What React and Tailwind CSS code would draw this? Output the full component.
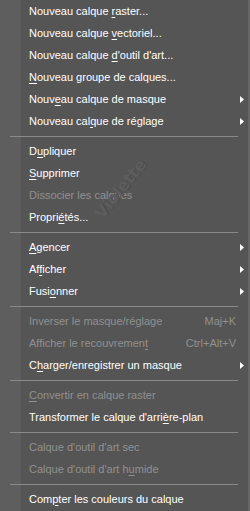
import React from 'react';

const groups = [
  [
    { pre: 'Nouveau calque ', u: 'r', post: 'aster...' },
    { pre: 'Nouveau calque ', u: 'v', post: 'ectoriel...' },
    { pre: 'Nouveau calque ', u: 'd', post: "'outil d'art..." },
    { pre: '', u: 'N', post: 'ouveau groupe de calques...' },
    { pre: 'Nouv', u: 'e', post: 'au calque de masque', sub: true },
    { pre: 'Nouveau cal', u: 'q', post: 'ue de réglage', sub: true },
  ],
  [
    { pre: 'D', u: 'u', post: 'pliquer' },
    { pre: '', u: 'S', post: 'upprimer' },
    { pre: 'Dissocier les calques', off: true },
    { pre: 'Propri', u: 'é', post: 'tés...' },
  ],
  [
    { pre: '', u: 'A', post: 'gencer', sub: true },
    { pre: 'Af', u: 'f', post: 'icher', sub: true },
    { pre: 'Fusi', u: 'o', post: 'nner', sub: true },
  ],
  [
    { pre: 'Inverser le masque/ré', u: 'g', post: 'lage', off: true, key: 'Maj+K' },
    { pre: 'Afficher le recouvremen', u: 't', post: '', off: true, key: 'Ctrl+Alt+V' },
    { pre: 'C', u: 'h', post: 'arger/enregistrer un masque', sub: true },
  ],
  [
    { pre: '', u: 'C', post: 'onvertir en calque raster', off: true },
    { pre: "Transformer le calque d'arri", u: 'è', post: 're-plan' },
  ],
  [
    { pre: "Calque d'outil d'art sec", off: true },
    { pre: "Calque d'outil d'art h", u: 'u', post: 'mide', off: true },
  ],
  [
    { pre: 'Com', u: 'p', post: 'ter les couleurs du calque' },
  ],
];

function Arrow() {
  return (
    <svg width="4" height="7" viewBox="0 0 4 7" className="absolute right-[4px]">
      <path d="M0 0 L4 3.5 L0 7 Z" fill="#ffffff" />
    </svg>
  );
}

function Item({ item }) {
  return (
    <div
      className={
        'relative h-[22px] flex items-center pl-[29px] pr-[12px] ' +
        (item.off ? 'text-[#919191]' : 'text-white')
      }
    >
      <span className="whitespace-nowrap">
        {item.pre}
        {item.u && <span className="underline underline-offset-2">{item.u}</span>}
        {item.post}
      </span>
      {item.key && <span className="ml-auto whitespace-nowrap">{item.key}</span>}
      {item.sub && <Arrow />}
    </div>
  );
}

function Separator() {
  return (
    <div className="h-[8px] flex items-center pl-[10px] pr-[10px]">
      <div className="h-px w-full bg-[#8a8a8a]" />
    </div>
  );
}

export default function App() {
  return (
    <div className="w-[250px] h-[511px] overflow-hidden bg-[linear-gradient(to_right,#5e5e5e_21px,#555555_21px)] border-r-2 border-[#666666] font-['Liberation_Sans',Arial,sans-serif] text-[11px] relative">
      {groups.map((g, i) => (
        <div key={i}>
          {i > 0 && <Separator />}
          {g.map((item, j) => (
            <Item key={j} item={item} />
          ))}
        </div>
      ))}
      {/* filigrane */}
      <div className="absolute left-[121px] top-[189px] -translate-x-1/2 -translate-y-1/2 -rotate-[51deg] text-[16px] leading-none font-bold text-[#5d5d5d] [text-shadow:1px_1px_0_#4c4c4c] font-['DejaVu_Sans',sans-serif] pointer-events-none whitespace-nowrap">
        Violette
      </div>
    </div>
  );
}
